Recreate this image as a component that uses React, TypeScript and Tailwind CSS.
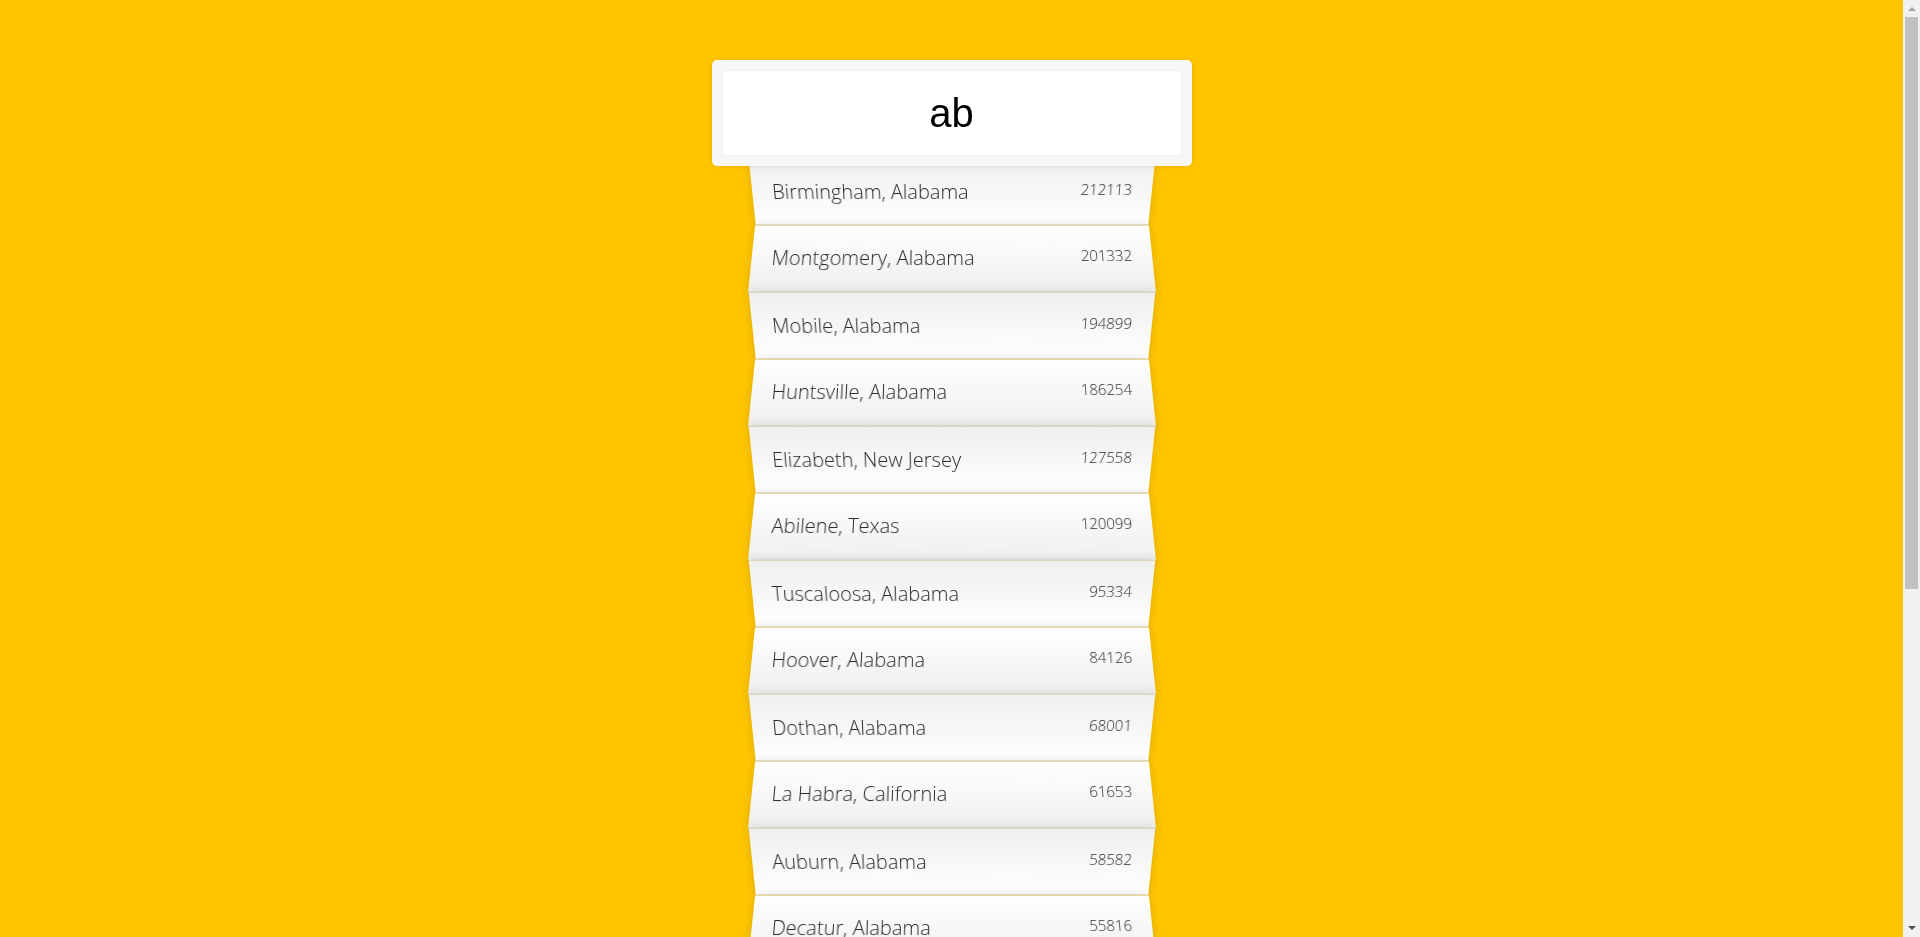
import React, { useState } from 'react';

type City = { city: string; state: string; population: string };

const cities: City[] = [
  { city: 'Birmingham', state: 'Alabama', population: '212113' },
  { city: 'Montgomery', state: 'Alabama', population: '201332' },
  { city: 'Mobile', state: 'Alabama', population: '194899' },
  { city: 'Huntsville', state: 'Alabama', population: '186254' },
  { city: 'Elizabeth', state: 'New Jersey', population: '127558' },
  { city: 'Abilene', state: 'Texas', population: '120099' },
  { city: 'Tuscaloosa', state: 'Alabama', population: '95334' },
  { city: 'Hoover', state: 'Alabama', population: '84126' },
  { city: 'Dothan', state: 'Alabama', population: '68001' },
  { city: 'La Habra', state: 'California', population: '61653' },
  { city: 'Auburn', state: 'Alabama', population: '58582' },
  { city: 'Decatur', state: 'Alabama', population: '55816' },
  { city: 'Madison', state: 'Alabama', population: '45799' },
  { city: 'Florence', state: 'Alabama', population: '40059' },
  { city: 'Phenix City', state: 'Alabama', population: '37498' },
  { city: 'Gadsden', state: 'Alabama', population: '36542' },
  { city: 'Prattville', state: 'Alabama', population: '35957' },
  { city: 'Vestavia Hills', state: 'Alabama', population: '34565' },
  { city: 'Alabaster', state: 'Alabama', population: '31977' },
];

const App = () => {
  const [query, setQuery] = useState('ab');

  const matches = cities.filter((place) => {
    const regex = new RegExp(query, 'gi');
    return place.city.match(regex) || place.state.match(regex);
  });

  return (
    <div className="flex h-screen bg-[#ffc600] font-['Open_Sans',sans-serif] text-[20px] font-light">
      <div className="flex-1 overflow-y-auto [scrollbar-width:none]">
        <div className="py-[50px]">
          <form className="mx-auto max-w-[400px]" onSubmit={(e) => e.preventDefault()}>
            {/* search box sticks out 10% on both sides */}
            <input
              type="text"
              className="relative left-[-10%] top-[10px] z-[2] m-0 w-[120%] rounded-[5px] border-[10px] border-[#f7f7f7] bg-white p-5 text-center font-['Liberation_Sans',Arial,sans-serif] text-[40px] font-normal leading-[46px] text-black outline-0 shadow-[0_0_5px_rgba(0,0,0,0.12),inset_0_0_2px_rgba(0,0,0,0.19)]"
              value={query}
              onChange={(e) => setQuery(e.target.value)}
            />
            <ul className="relative m-0 p-0">
              {matches.map((place) => (
                <li
                  key={place.city + place.state}
                  className="m-0 flex list-none justify-between border-b border-[#d8d8d8] p-5 leading-[26px] text-[#2a2a2a] capitalize shadow-[0_0_10px_rgba(0,0,0,0.14)] transition-colors odd:bg-linear-to-t odd:from-white odd:to-[#efefef] odd:[transform:perspective(100px)_rotateX(-3deg)_translateY(3px)] even:bg-linear-to-b even:from-white even:to-[#efefef] even:[transform:perspective(100px)_rotateX(3deg)_translateY(2px)_scale(1.001)]"
                >
                  <span>
                    {place.city}, {place.state}
                  </span>
                  <span className="text-[15px] leading-[20px]">{place.population}</span>
                </li>
              ))}
            </ul>
          </form>
        </div>
      </div>

      {/* window scrollbar */}
      <div className="flex w-[17px] shrink-0 flex-col bg-[#f1f1f1]">
        <div className="flex h-[17px] items-center justify-center">
          <svg width="8" height="5" viewBox="0 0 8 5">
            <path d="M0 5 L4 1 L8 5 Z" fill="#a3a3a3" />
          </svg>
        </div>
        <div className="mx-[2px] h-[572px] bg-[#c1c1c1]" />
        <div className="flex-1" />
        <div className="flex h-[17px] items-center justify-center">
          <svg width="8" height="5" viewBox="0 0 8 5">
            <path d="M0 0 L8 0 L4 4 Z" fill="#505050" />
          </svg>
        </div>
      </div>
    </div>
  );
};

export default App;
